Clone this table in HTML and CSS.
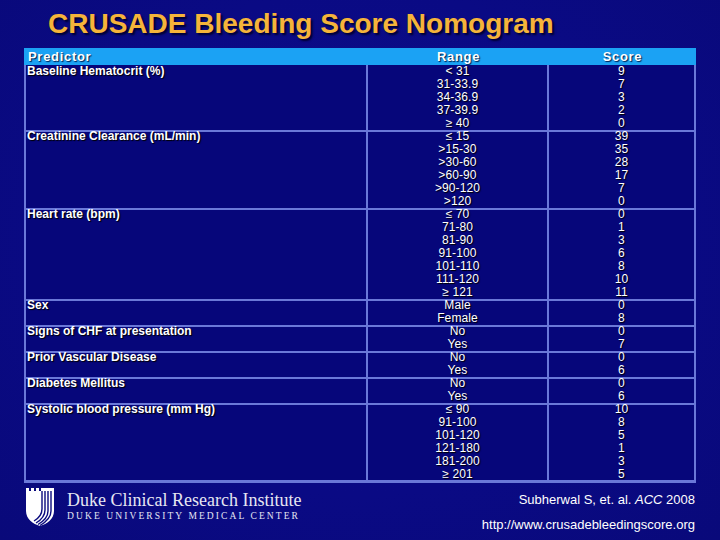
FILE: index.html
```html
<!DOCTYPE html>
<html>
<head>
<meta charset="utf-8">
<link rel="stylesheet" href="styles.css">
</head>
<body>
<div class="slide">
  <h1 class="title">CRUSADE Bleeding Score Nomogram</h1>
  <div class="nomogram">
    <div class="head">
      <div class="h-pred">Predictor</div>
      <div class="h-mid">Range</div>
      <div class="h-mid">Score</div>
    </div>
    <div class="body">
      <div class="group first">
        <div class="label">Baseline Hematocrit (%)</div>
        <div class="vals"><div>&lt; 31</div><div>31-33.9</div><div>34-36.9</div><div>37-39.9</div><div>≥ 40</div></div>
        <div class="vals"><div>9</div><div>7</div><div>3</div><div>2</div><div>0</div></div>
      </div>
      <div class="group">
        <div class="label">Creatinine Clearance (mL/min)</div>
        <div class="vals"><div>≤ 15</div><div>&gt;15-30</div><div>&gt;30-60</div><div>&gt;60-90</div><div>&gt;90-120</div><div>&gt;120</div></div>
        <div class="vals"><div>39</div><div>35</div><div>28</div><div>17</div><div>7</div><div>0</div></div>
      </div>
      <div class="group">
        <div class="label">Heart rate (bpm)</div>
        <div class="vals"><div>≤ 70</div><div>71-80</div><div>81-90</div><div>91-100</div><div>101-110</div><div>111-120</div><div>≥ 121</div></div>
        <div class="vals"><div>0</div><div>1</div><div>3</div><div>6</div><div>8</div><div>10</div><div>11</div></div>
      </div>
      <div class="group">
        <div class="label">Sex</div>
        <div class="vals"><div>Male</div><div>Female</div></div>
        <div class="vals"><div>0</div><div>8</div></div>
      </div>
      <div class="group">
        <div class="label">Signs of CHF at presentation</div>
        <div class="vals"><div>No</div><div>Yes</div></div>
        <div class="vals"><div>0</div><div>7</div></div>
      </div>
      <div class="group">
        <div class="label">Prior Vascular Disease</div>
        <div class="vals"><div>No</div><div>Yes</div></div>
        <div class="vals"><div>0</div><div>6</div></div>
      </div>
      <div class="group">
        <div class="label">Diabetes Mellitus</div>
        <div class="vals"><div>No</div><div>Yes</div></div>
        <div class="vals"><div>0</div><div>6</div></div>
      </div>
      <div class="group last">
        <div class="label">Systolic blood pressure (mm Hg)</div>
        <div class="vals"><div>≤ 90</div><div>91-100</div><div>101-120</div><div>121-180</div><div>181-200</div><div>≥ 201</div></div>
        <div class="vals"><div>10</div><div>8</div><div>5</div><div>1</div><div>3</div><div>5</div></div>
      </div>
    </div>
  </div>
  <div class="footer">
    <div class="dcri">
      <svg class="logo" width="30" height="40" viewBox="0 0 30 40">
        <path d="M1 1 H4 V4 H6 V1 H9 V4 H11 V1 H14 V4 H16 V1 H29 V24 C29 32 22 37 15 39 C8 37 1 32 1 24 Z" fill="#ffffff"/>
        <path d="M17 4 V22 C17 27 14 31 9 34" stroke="#0a0a7e" stroke-width="1.4" fill="none"/>
        <path d="M20 4 V23 C20 29 16 33 11 36" stroke="#0a0a7e" stroke-width="1.4" fill="none"/>
        <path d="M23 4 V24 C23 30 19 34 13 37.5" stroke="#0a0a7e" stroke-width="1.4" fill="none"/>
        <path d="M26 4 V24 C26 31 21 35 15 38.5" stroke="#0a0a7e" stroke-width="1.4" fill="none"/>
      </svg>
      <div class="dcri-text">
        <div class="dcri-name">Duke Clinical Research Institute</div>
        <div class="dcri-sub">DUKE UNIVERSITY MEDICAL CENTER</div>
      </div>
    </div>
    <div class="cite">
      <div>Subherwal S, et. al. <i>ACC</i> 2008</div>
      <div>http://www.crusadebleedingscore.org</div>
    </div>
  </div>
</div>
</body>
</html>
```

FILE: styles.css
```css
html, body {
  margin: 0;
  padding: 0;
}
body {
  width: 720px;
  height: 540px;
  overflow: hidden;
  background: radial-gradient(ellipse at 50% 45%, #0c0c8c 0%, #0a0a84 60%, #09097a 100%);
  font-family: "Liberation Sans", Arial, sans-serif;
  color: #ffffff;
}
.slide {
  padding-left: 24px;
}
.title {
  margin: 0;
  padding-left: 24px;
  height: 48px;
  line-height: 48px;
  font-size: 28px;
  font-weight: bold;
  color: #f5b43a;
  text-shadow: 2px 2px 2px #000030;
}
.nomogram {
  width: 672px;
}
.head {
  display: grid;
  grid-template-columns: 344px 181px 147px;
  height: 17px;
  background: #1ba2f4;
  font-size: 13px;
  font-weight: bold;
  letter-spacing: 0.7px;
  line-height: 17px;
  text-shadow: 1px 1px 1px #002050;
}
.h-pred {
  padding-left: 4px;
}
.h-mid {
  text-align: center;
}
.body {
  border: 2px solid #6a78d8;
  border-top: none;
  background: #06067a;
  font-size: 12px;
  line-height: 13px;
  text-shadow: 1px 1px 1px #000000;
}
.group {
  display: grid;
  grid-template-columns: 340px 181px 147px;
  background: linear-gradient(#6a78d8, #6a78d8) top / 100% 2px no-repeat;
}
.group.first {
  background: none;
}
.label {
  padding-left: 1px;
  font-weight: bold;
  font-size: 12px;
}
.vals {
  border-left: 2px solid #6a78d8;
  text-align: center;
  letter-spacing: 0.1px;
}
.group.last .vals div:last-child {
  background: linear-gradient(#6a78d8, #6a78d8) bottom / 100% 1px no-repeat;
}
.group.last .label {
  background: linear-gradient(#6a78d8, #6a78d8) bottom / 100% 1px no-repeat;
}
.footer {
  display: flex;
  justify-content: space-between;
  padding-top: 2px;
  width: 672px;
}
.dcri {
  display: flex;
  align-items: flex-start;
  padding-left: 1px;
}
.logo {
  display: block;
  margin-top: 2px;
}
.dcri-text {
  margin-left: 12px;
  font-family: "Liberation Serif", "Times New Roman", serif;
  color: #e6e6f2;
}
.dcri-name {
  font-size: 18px;
  line-height: 20px;
  margin-top: 5px;
}
.dcri-sub {
  font-size: 9.5px;
  letter-spacing: 2.1px;
  line-height: 12px;
}
.cite {
  text-align: right;
  font-size: 13px;
  line-height: 25px;
  padding-top: 2px;
  padding-right: 1px;
}
```
